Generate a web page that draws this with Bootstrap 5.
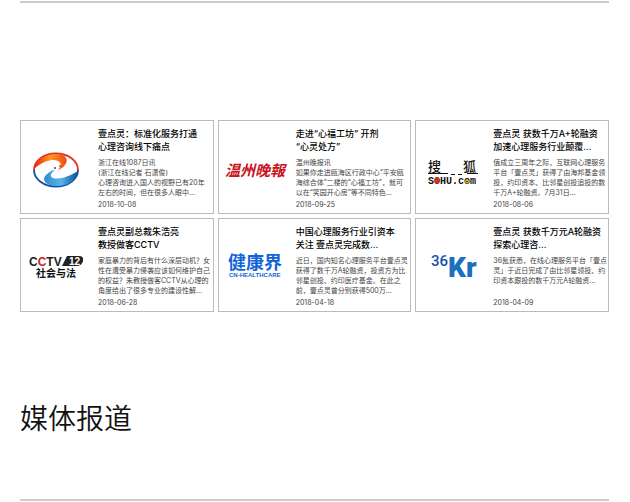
<!DOCTYPE html>
<html lang="zh-CN">
<head>
<meta charset="utf-8">
<meta name="viewport" content="width=device-width, initial-scale=1">
<title>媒体报道</title>
<link href="https://cdn.jsdelivr.net/npm/bootstrap@5.3.0/dist/css/bootstrap.min.css" rel="stylesheet">
<style>
body{font-family:Inter,"Noto Sans CJK SC",sans-serif;color:#222;background:#fff}
.page-wrap{padding:1px 21px 0 20px}
.rule{height:2px;background:#ccc;margin:0}
.news-list{padding-top:117px}
.news-card{min-height:94px;border:1px solid #bbb;padding:6px 0 0 6px}
.logo-cell{width:71px;padding-bottom:6px}
.news-title{font-size:9px;line-height:13px;font-weight:500;color:#000;margin:0 0 5px;white-space:nowrap}
.news-text{font-size:7px;line-height:10px;font-weight:400;color:#444;min-height:42px;margin:0;white-space:nowrap}
.news-date{font-size:7px;line-height:10px;color:#444;font-weight:400}
.section-title{font-size:28px;line-height:40px;font-weight:350;color:#111;margin:87px 0 60px}
svg{overflow:visible}
svg text{font-family:"Liberation Sans","Noto Sans CJK SC",sans-serif}
svg .mono{font-family:"Liberation Mono",monospace}
svg .compact{font-family:Roboto,sans-serif}
</style>
</head>
<body>
<main class="page-wrap">
<div class="rule"></div>
<section class="news-list">
<div class="row row-cols-3 g-1">

<div class="col"><article class="news-card d-flex">
<div class="logo-cell d-flex align-items-center flex-shrink-0">
<svg width="60" height="50" viewBox="0 0 60 50" role="img" aria-label="浙江在线">
<defs>
<linearGradient id="warm" x1="0" x2="1"><stop offset="0" stop-color="#e8200c"/><stop offset=".5" stop-color="#ff9a1c"/><stop offset="1" stop-color="#e8481a"/></linearGradient>
<linearGradient id="cool" x1="0" x2="1"><stop offset="0" stop-color="#2c8fd0"/><stop offset=".5" stop-color="#58b4e4"/><stop offset="1" stop-color="#0b4da0"/></linearGradient>
</defs>
<path d="M7 28A22 16.500 0 0 1 51 28" fill="none" stroke="#e0301a" stroke-width="1.800"/>
<path d="M7 28A22 16.500 0 0 0 51 28" fill="none" stroke="#1450a0" stroke-width="1.800"/>
<path d="M7 27C8 18 18 12 30 12C39 12 42 18 38 23C36 26 33 27 31 28C34 24 35 21 31 19C24 16 15 20 7 27Z" fill="url(#warm)"/>
<path d="M51 29C50 38 41 44 30 44C19 44 14 38 19 33C22 30 25 28 28 28C24 31 22 34 26 36C33 38 43 34 51 29Z" fill="url(#cool)"/>
<circle cx="33" cy="24" r="1" fill="#e0561a"/><circle cx="28" cy="26" r="1" fill="#1450a0"/>
</svg></div>
<div><h2 class="news-title">壹点灵：标准化服务打通<br>心理咨询线下痛点</h2>
<p class="news-text">浙江在线1087日讯<br>(浙江在线记者 石潇俊)<br>心理咨询进入国人的视野已有20年<br>左右的时间，但在很多人眼中...</p>
<time class="news-date d-block" datetime="2018-10-08">2018-10-08</time></div>
</article></div>

<div class="col"><article class="news-card d-flex">
<div class="logo-cell d-flex align-items-center flex-shrink-0">
<svg width="60" height="50" viewBox="0 0 60 50">
<text x="0" y="34" font-size="15" font-weight="700" font-style="italic" fill="#c81420">温州晚報</text>
</svg></div>
<div><h2 class="news-title">走进“心福工坊” 开剂<br>“心灵处方”</h2>
<p class="news-text">温州晚报讯<br>如果你走进瓯海区行政中心“平安瓯<br>海综合体”二楼的“心福工坊”，就可<br>以在“笑园开心房”等不同特色...</p>
<time class="news-date d-block" datetime="2018-09-25">2018-09-25</time></div>
</article></div>

<div class="col"><article class="news-card d-flex">
<div class="logo-cell d-flex align-items-center flex-shrink-0">
<svg width="60" height="50" viewBox="0 0 60 50">
<g fill="#111"><text x="6" y="29" font-size="13" font-weight="500">搜</text><text x="41" y="29" font-size="13" font-weight="500">狐</text>
<path d="M6 31h20v1H6zM29 32h4v1h-4zM36 32h4v1h-4zM45 31h11v1H45z"/>
<text class="mono" x="6" y="42" font-size="10" font-weight="700">SOHU.com</text></g>
<ellipse cx="15" cy="38.500" rx="2.500" ry="3.200" fill="#e02a1a"/><circle cx="45" cy="39.500" r="2" fill="#f0c000"/><circle cx="45" cy="39.500" r=".8" fill="#222"/><circle cx="33" cy="41" r="1" fill="#d22"/>
</svg></div>
<div><h2 class="news-title">壹点灵 获数千万A+轮融资<br>加速心理服务行业颠覆...</h2>
<p class="news-text">值成立三周年之际，互联网心理服务<br>平台「壹点灵」获得了由海邦基金领<br>投，约印资本、比邻星创投追投的数<br>千万A+轮融资。7月31日...</p>
<time class="news-date d-block" datetime="2018-08-06">2018-08-06</time></div>
</article></div>

<div class="col"><article class="news-card d-flex">
<div class="logo-cell d-flex align-items-center flex-shrink-0">
<svg width="60" height="50" viewBox="0 0 60 50">
<path d="M40 16H52Q57 16 56 21Q55 26 49 26H35Z" fill="#222"/>
<text x="2" y="26" font-size="12" font-weight="700" fill="#222">C<tspan fill="#d8202a">C</tspan>TV</text>
<text x="42" y="25" font-size="10" font-weight="700" fill="#fff">12</text>
<text x="9" y="37" font-size="10" font-weight="700" fill="#111">社会与法</text>
</svg></div>
<div><h2 class="news-title">壹点灵副总裁朱浩亮<br>教授做客CCTV</h2>
<p class="news-text">家庭暴力的背后有什么深层动机？女<br>性在遭受暴力侵袭应该如何维护自己<br>的权益？朱教授做客CCTV从心理的<br>角度给出了很多专业的建设性解...</p>
<time class="news-date d-block" datetime="2018-06-28">2018-06-28</time></div>
</article></div>

<div class="col"><article class="news-card d-flex">
<div class="logo-cell d-flex align-items-center flex-shrink-0">
<svg width="60" height="50" viewBox="0 0 60 50">
<g fill="#1464d8"><text x="3" y="29" font-size="18" font-weight="700">健康界</text>
<text x="4" y="37" font-size="6" font-weight="700">CN-HEALTHCARE</text></g>
</svg></div>
<div><h2 class="news-title">中国心理服务行业引资本<br>关注 壹点灵完成数...</h2>
<p class="news-text">近日，国内知名心理服务平台壹点灵<br>获得了数千万A轮融资，投资方为比<br>邻星创投、约印医疗基金。在此之<br>前，壹点灵曾分别获得500万...</p>
<time class="news-date d-block" datetime="2018-04-18">2018-04-18</time></div>
</article></div>

<div class="col"><article class="news-card d-flex">
<div class="logo-cell d-flex align-items-center flex-shrink-0">
<svg width="60" height="50" viewBox="0 0 60 50">
<text class="compact" x="9" y="26" font-size="15" font-weight="500" fill="#1450a8">36</text>
<text class="compact" x="26" y="37" font-size="28" font-weight="900" fill="#1c70c0">Kr</text>
</svg></div>
<div><h2 class="news-title">壹点灵 获数千万元A轮融资<br>探索心理咨...</h2>
<p class="news-text">36氪获悉，在线心理服务平台「壹点<br>灵」于近日完成了由比邻星领投、约<br>印资本跟投的数千万元A轮融资...</p>
<time class="news-date d-block" datetime="2018-04-09">2018-04-09</time></div>
</article></div>

</div>
</section>
<h1 class="section-title">媒体报道</h1>
<div class="rule"></div>
</main>
<script src="https://cdn.jsdelivr.net/npm/bootstrap@5.3.0/dist/js/bootstrap.bundle.min.js"></script>
</body>
</html>
